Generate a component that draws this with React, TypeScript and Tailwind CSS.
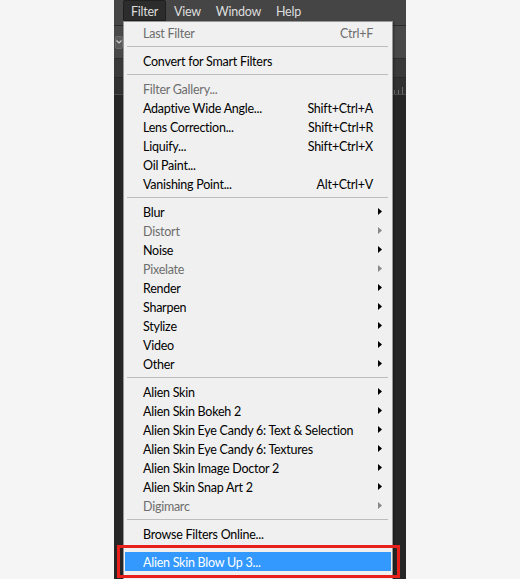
import React from 'react';

type Entry =
  | { sep: true }
  | { sep?: false; label: string; shortcut?: string; disabled?: boolean; sub?: boolean; active?: boolean };

const entries: Entry[] = [
  { label: 'Last Filter', shortcut: 'Ctrl+F', disabled: true },
  { sep: true },
  { label: 'Convert for Smart Filters' },
  { sep: true },
  { label: 'Filter Gallery...', disabled: true },
  { label: 'Adaptive Wide Angle...', shortcut: 'Shift+Ctrl+A' },
  { label: 'Lens Correction...', shortcut: 'Shift+Ctrl+R' },
  { label: 'Liquify...', shortcut: 'Shift+Ctrl+X' },
  { label: 'Oil Paint...' },
  { label: 'Vanishing Point...', shortcut: 'Alt+Ctrl+V' },
  { sep: true },
  { label: 'Blur', sub: true },
  { label: 'Distort', sub: true, disabled: true },
  { label: 'Noise', sub: true },
  { label: 'Pixelate', sub: true, disabled: true },
  { label: 'Render', sub: true },
  { label: 'Sharpen', sub: true },
  { label: 'Stylize', sub: true },
  { label: 'Video', sub: true },
  { label: 'Other', sub: true },
  { sep: true },
  { label: 'Alien Skin', sub: true },
  { label: 'Alien Skin Bokeh 2', sub: true },
  { label: 'Alien Skin Eye Candy 6: Text & Selection', sub: true },
  { label: 'Alien Skin Eye Candy 6: Textures', sub: true },
  { label: 'Alien Skin Image Doctor 2', sub: true },
  { label: 'Alien Skin Snap Art 2', sub: true },
  { label: 'Digimarc', sub: true, disabled: true },
  { sep: true },
  { label: 'Browse Filters Online...' },
  { sep: true },
  { label: 'Alien Skin Blow Up 3...', active: true },
];

function Arrow({ disabled }: { disabled?: boolean }) {
  return (
    <svg width="4" height="7" viewBox="0 0 4 7" className="mr-[10px] mb-[3px]">
      <polygon points="0,0 4,3.5 0,7" fill={disabled ? '#8a8a8a' : '#000'} />
    </svg>
  );
}

export default function App() {
  return (
    <div className="w-[520px] h-[579px] bg-[#f5f5f5] flex justify-center overflow-hidden font-['Lato',sans-serif] tracking-[-0.25px]">
      <div className="relative w-[292px] h-full bg-[#262626] flex flex-col">
        {/* menu bar */}
        <div className="h-[26px] bg-[#454545] flex items-start pl-[9px] text-[12.5px] text-[#dedede] border-b border-[#2b2b2b]">
          <div className="h-[21px] w-[43px] pt-[4px] bg-[#2c2c2c] border border-[#1f1f1f] rounded-t-[2px] flex items-center justify-center">
            Filter
          </div>
          <div className="h-[21px] pt-[4px] flex items-center ml-[8px]">View</div>
          <div className="h-[21px] pt-[4px] flex items-center ml-[15px]">Window</div>
          <div className="h-[21px] pt-[4px] flex items-center ml-[15px]">Help</div>
        </div>

        {/* options bar */}
        <div className="h-[33px] bg-[#484848] border-b border-[#2e2e2e] flex items-center pl-[1px]">
          <div className="w-[8px] h-[13px] bg-[#5a5a5a] border border-[#6a6a6a] rounded-[2px] flex items-center justify-center">
            <svg width="6" height="4" viewBox="0 0 6 4">
              <path d="M0.5 0.5 L3 3 L5.5 0.5" stroke="#ccc" strokeWidth="1.2" fill="none" />
            </svg>
          </div>
        </div>

        {/* document tabs + ruler */}
        <div className="h-[19px] bg-[#393939] border-b border-[#2a2a2a]" />
        <div className="h-[17px] bg-[#313131] border-b border-[#4a4a4a] flex items-end justify-end gap-[3px] pr-[3px]">
          <div className="w-px h-[4px] bg-[#6a6a6a]" />
          <div className="w-px h-[4px] bg-[#6a6a6a]" />
          <div className="w-px h-[7px] bg-[#6a6a6a]" />
        </div>
        <div className="flex-1 bg-[#262626]" />

        {/* Filter dropdown */}
        <div className="absolute left-[9px] top-[21px] w-[270px] bottom-[-20px] bg-[#f0f0f0] border border-[#979797] pt-[1px] text-[12.5px] leading-[17px] shadow-[1px_1px_2px_rgba(0,0,0,0.35)]">
          {entries.map((e, i) =>
            e.sep ? (
              <div key={i} className="h-[9px] flex items-center pl-[3px] pr-[4px]">
                <div className="h-px w-full bg-[#bdbdbd]" />
              </div>
            ) : (
              <div
                key={i}
                className={
                  e.active
                    ? 'h-[19px] pt-[2px] mx-[1px] flex items-center pl-[18px] bg-[#3399ff] text-white'
                    : 'h-[19px] pt-[2px] flex items-center pl-[19px] ' + (e.disabled ? 'text-[#6d6d6d]' : 'text-black')
                }
              >
                <span className="flex-1 whitespace-nowrap">{e.label}</span>
                {e.shortcut && <span className="mr-[19px]">{e.shortcut}</span>}
                {e.sub && <Arrow disabled={e.disabled} />}
              </div>
            )
          )}
        </div>

        {/* highlight frame around the chosen entry */}
        <div className="absolute left-[3px] top-[545px] w-[283px] h-[33px] border-[3px] border-[#e8201c]" />
      </div>
    </div>
  );
}
